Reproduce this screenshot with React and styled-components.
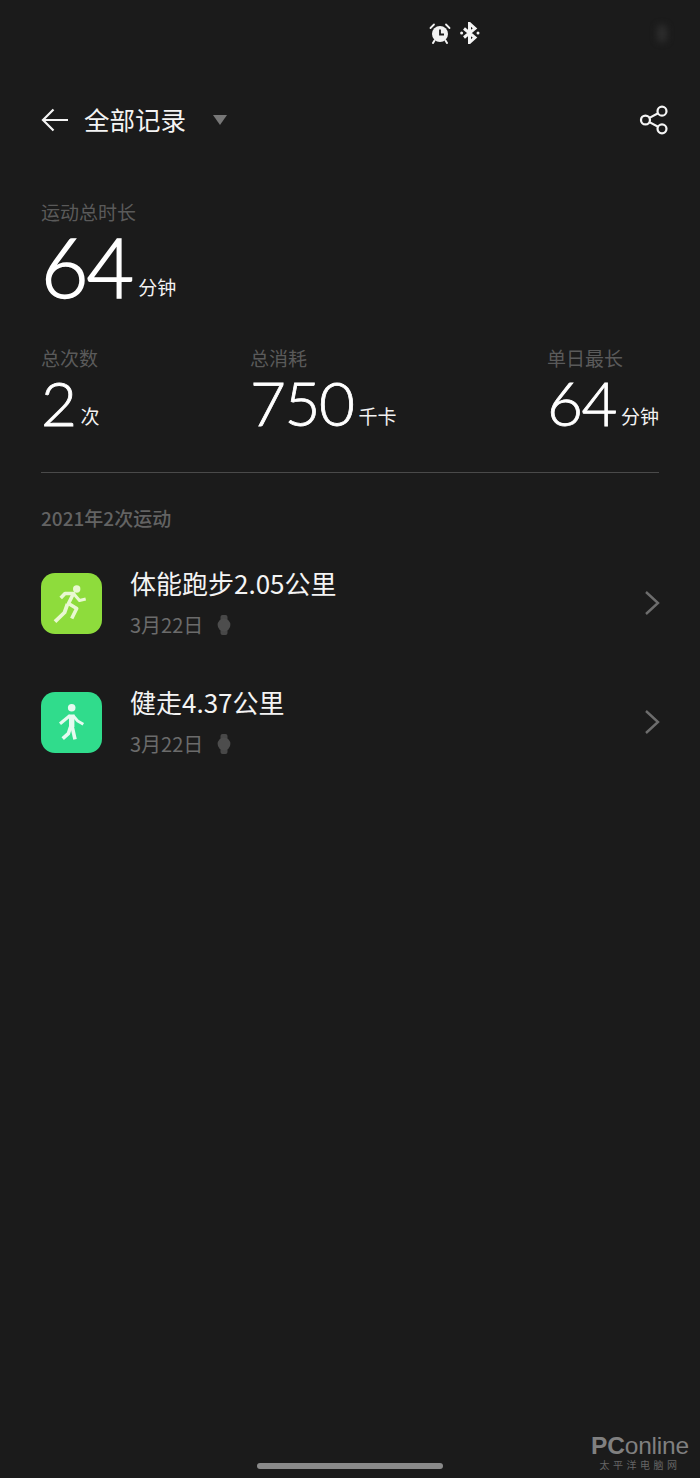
import React from "react";
import styled, { createGlobalStyle } from "styled-components";

const CJK = '"Noto Sans CJK SC", "Noto Sans", sans-serif';
const NUM = 'Lato, "Noto Sans CJK SC", sans-serif';

const Global = createGlobalStyle`
  html, body { margin: 0; padding: 0; background: #1b1b1b; }
  * { box-sizing: border-box; }
`;

const Page = styled.div`
  position: relative;
  width: 700px;
  height: 1478px;
  overflow: hidden;
  background: #1b1b1b;
  color: #fff;
  font-family: ${CJK};
  padding: 0 41px;
  display: flex;
  flex-direction: column;
`;

const StatusBar = styled.div`
  height: 66px;
  display: flex;
  align-items: center;
  justify-content: flex-end;
  gap: 8px;
  padding-right: 178px;
`;

const StatusSmudge = styled.span`
  position: absolute;
  left: 657px;
  top: 25px;
  width: 10px;
  height: 17px;
  border-radius: 3px;
  background: #2c2c2c;
  filter: blur(3px);
`;

const Header = styled.header`
  height: 108px;
  display: flex;
  align-items: center;
`;

const HeaderTitle = styled.h1`
  margin: -2px 0 0 15px;
  font-size: 25.5px;
  line-height: 36px;
  font-weight: 400;
  color: #f4f4f4;
`;

const Caret = styled.span`
  margin-left: 27px;
  width: 0;
  height: 0;
  border-left: 7.5px solid transparent;
  border-right: 7.5px solid transparent;
  border-top: 10px solid #777;
`;

const ShareButton = styled.span`
  margin-left: auto;
  display: flex;
  margin-right: -11px;
`;

const Summary = styled.section`
  padding-top: 24px;
`;

const Label = styled.div`
  font-size: 19px;
  line-height: 28px;
  color: #5a5a5a;
`;

const ValueLine = styled.div`
  white-space: nowrap;
  height: ${(p) => (p.$big ? "81px" : "60px")};
  line-height: ${(p) => (p.$big ? "81px" : "60px")};
`;

const Number = styled.span`
  font-family: ${NUM};
  font-weight: 300;
  font-size: ${(p) => (p.$big ? "82px" : "62px")};
  letter-spacing: ${(p) => (p.$big ? "-2px" : "-1.5px")};
  -webkit-text-stroke: ${(p) => (p.$big ? "1.5px" : "0.8px")} #fff;
  color: #fff;
`;

const Unit = styled.span`
  font-size: 19px;
  margin-left: ${(p) => (p.$big ? "6px" : "5px")};
  vertical-align: ${(p) => (p.$big ? "3px" : "2px")};
  color: #f2f2f2;
`;

const StatsRow = styled.div`
  display: flex;
  justify-content: space-between;
  margin-top: 37px;
  padding-bottom: 40px;
  border-bottom: 1px solid #4a4a4a;
`;

const Stat = styled.div`
  display: flex;
  flex-direction: column;
`;

const SectionTitle = styled.h2`
  margin: 31px 0 0;
  font-size: 19px;
  line-height: 28px;
  font-weight: 500;
  color: #636363;
`;

const List = styled.div`
  margin-top: 26px;
  display: flex;
  flex-direction: column;
  gap: 29px;
`;

const Row = styled.div`
  display: flex;
  align-items: center;
  height: 90px;
`;

const Tile = styled.div`
  width: 61px;
  height: 61px;
  border-radius: 14px;
  background: ${(p) => p.$color};
  display: flex;
  flex: none;
`;

const RowText = styled.div`
  margin-left: 28px;
  flex: 1;
  display: flex;
  flex-direction: column;
  padding-bottom: 3px;
`;

const RowTitle = styled.div`
  font-size: 26px;
  line-height: 38px;
  color: #f4f4f4;
`;

const RowMeta = styled.div`
  display: flex;
  align-items: center;
  gap: 14px;
  margin-top: 9px;
  font-size: 20px;
  line-height: 28px;
  color: #6b6b6b;
`;

const ChevronSlot = styled.span`
  display: flex;
  margin-right: -1px;
`;

const GestureBar = styled.div`
  position: absolute;
  left: 257px;
  bottom: 9px;
  width: 186px;
  height: 6px;
  border-radius: 3px;
  background: #8a8a8a;
`;

const Watermark = styled.div`
  position: absolute;
  right: 9px;
  bottom: 7px;
  width: 102px;
  display: flex;
  flex-direction: column;
  align-items: center;
  color: #808080;
  font-family: "Liberation Sans", sans-serif;
`;

const WatermarkLogo = styled.div`
  font-size: 24.5px;
  line-height: 24px;
  font-weight: 700;
  letter-spacing: -0.2px;
`;

const WatermarkThin = styled.span`
  font-weight: 400;
`;

const WatermarkSub = styled.div`
  font-family: ${CJK};
  font-size: 10px;
  line-height: 12px;
  letter-spacing: 3.5px;
  margin-top: 1px;
  color: #666;
`;

const Alarm = () => (
  <svg width="22" height="22" viewBox="0 0 22 22">
    <circle cx="11" cy="12" r="8" fill="#f2f2f2" />
    <path d="M5.5 18.5 4 21M16.5 18.5 18 21" stroke="#f2f2f2" strokeWidth="2" strokeLinecap="round" />
    <path d="M1.5 6 5 2.5M20.5 6 17 2.5" stroke="#f2f2f2" strokeWidth="1.8" strokeLinecap="round" />
    <path d="M11 7.5V12.5H15" fill="none" stroke="#1b1b1b" strokeWidth="1.8" />
  </svg>
);

const Bluetooth = () => (
  <svg width="22" height="22" viewBox="0 0 22 22">
    <path d="M5 6.5 16 15.5 10.5 20.5V1.5L16 6.5 5 15.5" fill="none" stroke="#f4f4f4" strokeWidth="3" />
    <circle cx="2.6" cy="11" r="1.5" fill="#f4f4f4" />
    <circle cx="19" cy="11" r="1.5" fill="#f4f4f4" />
  </svg>
);

const Back = () => (
  <svg width="28" height="24" viewBox="0 0 28 24">
    <path d="M27 12H2M12.5 1.5 2 12l10.5 10.5" fill="none" stroke="#f4f4f4" strokeWidth="2.2" />
  </svg>
);

const Share = () => (
  <svg width="32" height="32" viewBox="0 0 30 30">
    <g fill="none" stroke="#f4f4f4" strokeWidth="2.1">
      <circle cx="7" cy="15" r="4.2" />
      <circle cx="22.5" cy="6.7" r="4.2" />
      <circle cx="22.5" cy="23.3" r="4.2" />
      <path d="M10.7 13 18.8 8.7M10.7 17 18.8 21.3" />
    </g>
  </svg>
);

const Runner = () => (
  <svg width="61" height="61" viewBox="0 0 61 61">
    <circle cx="35.7" cy="16" r="3.7" fill="#e9f8d2" />
    <g fill="none" stroke="#e9f8d2" strokeLinejoin="round" strokeLinecap="butt">
      <path d="M19.7 25 24 20.5H32.5L27.5 30.5 35.7 35.5 30.7 45.5" strokeWidth="3.6" />
      <path d="M32.5 20.5 38.5 27.5 44.7 26" strokeWidth="3" />
      <path d="M26.5 31 23.5 39.5 14 48.7" strokeWidth="3.8" />
    </g>
  </svg>
);

const Walker = () => (
  <svg width="61" height="61" viewBox="0 0 61 61">
    <circle cx="30.7" cy="15.7" r="3.8" fill="#e6faf0" />
    <g fill="none" stroke="#e6faf0" strokeLinejoin="round" strokeLinecap="butt">
      <path d="M30.7 22.5V35" strokeWidth="5.4" />
      <path d="M29 23.5 19 31.7" strokeWidth="3.2" />
      <path d="M32 23.5 36.7 29 42.3 32.3" strokeWidth="2.8" />
      <path d="M31 34 34 47.3" strokeWidth="3.6" />
      <path d="M29.5 35 27.3 41.7 21.7 46.7" strokeWidth="3.6" />
    </g>
  </svg>
);

const Watch = () => (
  <svg width="14" height="20" viewBox="0 0 14 20">
    <rect x="3.5" y="0" width="7" height="20" rx="2" fill="#484848" />
    <circle cx="7" cy="10" r="6.4" fill="#4d4d4d" />
  </svg>
);

const Chevron = () => (
  <svg width="16" height="26" viewBox="0 0 16 26">
    <path d="M2 2 14 13 2 24" fill="none" stroke="#6d6d6d" strokeWidth="2.4" />
  </svg>
);

const stats = [
  { label: "总次数", value: "2", unit: "次" },
  { label: "总消耗", value: "750", unit: "千卡" },
  { label: "单日最长", value: "64", unit: "分钟" },
];

const records = [
  { title: "体能跑步2.05公里", date: "3月22日", color: "#8edc3c", Icon: Runner },
  { title: "健走4.37公里", date: "3月22日", color: "#30dc8c", Icon: Walker },
];

export default function App() {
  return (
    <Page>
      <Global />
      <StatusBar>
        <Alarm />
        <Bluetooth />
      </StatusBar>
      <StatusSmudge />
      <Header>
        <Back />
        <HeaderTitle>全部记录</HeaderTitle>
        <Caret />
        <ShareButton>
          <Share />
        </ShareButton>
      </Header>
      <Summary>
        <Label>运动总时长</Label>
        <ValueLine $big>
          <Number $big>64</Number>
          <Unit $big>分钟</Unit>
        </ValueLine>
      </Summary>
      <StatsRow>
        {stats.map((s) => (
          <Stat key={s.label}>
            <Label>{s.label}</Label>
            <ValueLine>
              <Number>{s.value}</Number>
              <Unit>{s.unit}</Unit>
            </ValueLine>
          </Stat>
        ))}
      </StatsRow>
      <SectionTitle>2021年2次运动</SectionTitle>
      <List>
        {records.map(({ title, date, color, Icon }) => (
          <Row key={title}>
            <Tile $color={color}>
              <Icon />
            </Tile>
            <RowText>
              <RowTitle>{title}</RowTitle>
              <RowMeta>
                {date}
                <Watch />
              </RowMeta>
            </RowText>
            <ChevronSlot>
              <Chevron />
            </ChevronSlot>
          </Row>
        ))}
      </List>
      <GestureBar />
      <Watermark>
        <WatermarkLogo>
          PC<WatermarkThin>online</WatermarkThin>
        </WatermarkLogo>
        <WatermarkSub>太平洋电脑网</WatermarkSub>
      </Watermark>
    </Page>
  );
}
